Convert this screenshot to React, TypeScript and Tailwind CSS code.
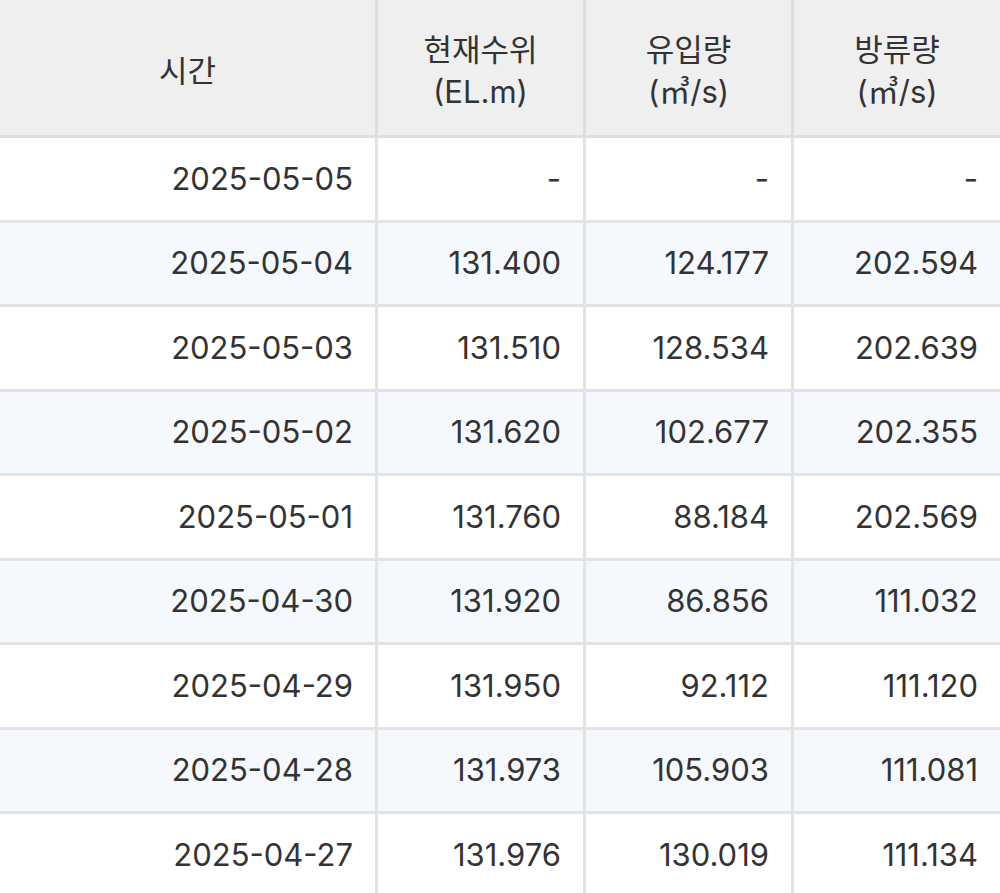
const rows = [
  ["2025-05-05", "-", "-", "-"],
  ["2025-05-04", "131.400", "124.177", "202.594"],
  ["2025-05-03", "131.510", "128.534", "202.639"],
  ["2025-05-02", "131.620", "102.677", "202.355"],
  ["2025-05-01", "131.760", "88.184", "202.569"],
  ["2025-04-30", "131.920", "86.856", "111.032"],
  ["2025-04-29", "131.950", "92.112", "111.120"],
  ["2025-04-28", "131.973", "105.903", "111.081"],
  ["2025-04-27", "131.976", "130.019", "111.134"],
];
const cols = "grid grid-cols-[378px_208px_208px_206px]";
export default function App() {
  return (
    <div className="w-[1000px] h-[893px] overflow-hidden bg-white text-[#333] text-[31px] leading-[40px]" style={{ fontFamily: 'Inter, "Noto Sans CJK KR", sans-serif' }}>
      <div className={`${cols} h-[138px] bg-[#efefef] border-b-[3px] border-[#dedede]`}>
        {[["시간"], ["현재수위", "(EL.m)"], ["유입량", "(㎥/s)"], ["방류량", "(㎥/s)"]].map((h, i) => (
          <div key={i} className={`flex flex-col items-center justify-center pt-[6px] ${i < 3 ? "border-r-[3px] border-[#dedede]" : ""}`}>
            {h.map((t) => <div key={t} className="leading-[42px]">{t}</div>)}
          </div>
        ))}
      </div>
      {rows.map((r, ri) => (
        <div key={ri} className={`${cols} h-[84.5px] border-b-[3px] border-[#e3e3e3] ${ri % 2 ? "bg-[#f5f8fc]" : "bg-white"}`}>
          {r.map((c, ci) => (
            <div key={ci} className={`flex items-center justify-end pr-[22px] ${ci < 3 ? "border-r-[3px] border-[#e3e3e3]" : ""}`}>{c}</div>
          ))}
        </div>
      ))}
    </div>
  );
}
